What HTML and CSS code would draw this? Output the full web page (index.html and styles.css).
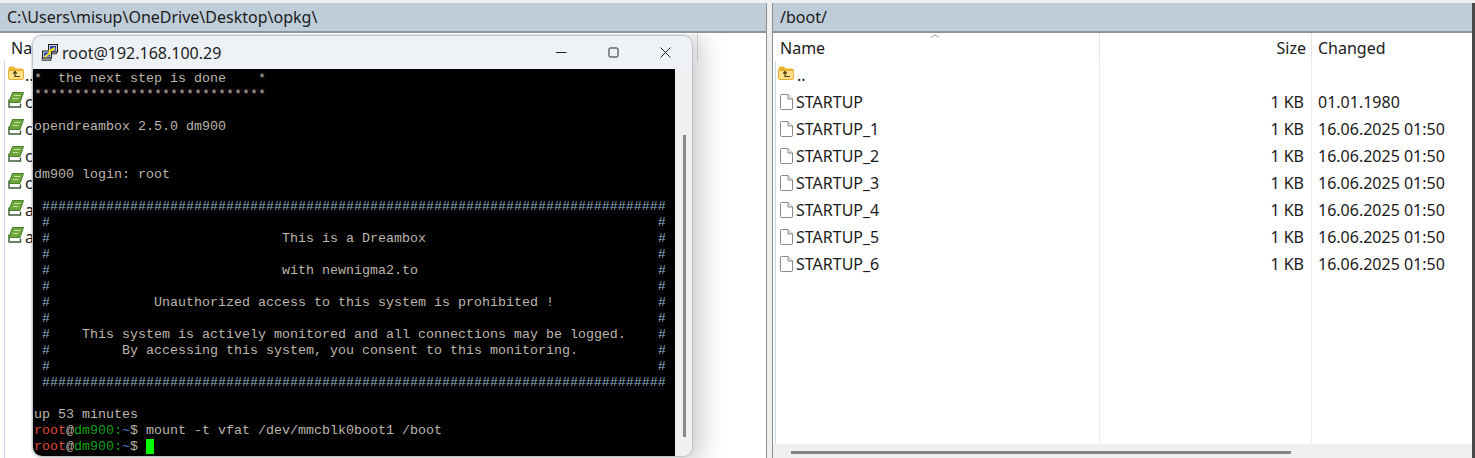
FILE: index.html
```html
<!DOCTYPE html>
<html lang="en">
<head>
<meta charset="utf-8">
<title>WinSCP</title>
<link rel="stylesheet" href="styles.css">
</head>
<body>
<svg class="defs" width="0" height="0" aria-hidden="true">
  <symbol id="up" viewBox="0 0 16 14">
    <path d="M0.5 2.5 Q0.5 0.5 2.5 0.5H6L7.5 2.5H14Q15.5 2.5 15.5 4V5H0.5Z" fill="#f0b429"/>
    <path d="M0.5 4.5H15.5V12Q15.5 13.5 14 13.5H2Q0.5 13.5 0.5 12Z" fill="#fde08a" stroke="#e6ad35"/>
    <path d="M7 5.5 L7 10.5 H12 M5.2 7.6 L7 5.5 L8.8 7.6" fill="none" stroke="#4a3b10" stroke-width="1.2"/>
  </symbol>
  <symbol id="book" viewBox="0 0 16 16">
    <path d="M1 7.5V15H12.5V11.5" fill="#fff" stroke="#3f5a3a" stroke-width="1.4"/>
    <path d="M4.5 .5H15.5L12 10.5H.8Z" fill="#6da63a" stroke="#4c7f2e"/>
    <path d="M6 3.5H12.5M4.8 6.5H10.5" stroke="#c4e09a" stroke-width="1"/>
  </symbol>
  <symbol id="file" viewBox="0 0 13 16">
    <path d="M0.5 1.5Q0.5 0.5 1.5 0.5H8L12.5 5V14.5Q12.5 15.5 11.5 15.5H1.5Q0.5 15.5 0.5 14.5Z" fill="#fff" stroke="#8a8a8a"/>
    <path d="M8 0.5V5H12.5" fill="#e8e8e8" stroke="#8a8a8a"/>
  </symbol>
</svg>

<div class="desk">
  <section class="panel panel-left">
    <div class="path">C:\Users\misup\OneDrive\Desktop\opkg\</div>
    <div class="list list-left">
      <div class="col col-lname">
        <div class="head">Name</div>
        <div class="body">
          <div class="cell"><svg class="ic-up"><use href="#up"/></svg><span>..</span></div>
          <div class="cell"><svg class="ic-book"><use href="#book"/></svg><span>c</span></div>
          <div class="cell"><svg class="ic-book"><use href="#book"/></svg><span>c</span></div>
          <div class="cell"><svg class="ic-book"><use href="#book"/></svg><span>c</span></div>
          <div class="cell"><svg class="ic-book"><use href="#book"/></svg><span>c</span></div>
          <div class="cell"><svg class="ic-book"><use href="#book"/></svg><span>a</span></div>
          <div class="cell"><svg class="ic-book"><use href="#book"/></svg><span>a</span></div>
        </div>
      </div>
      <div class="col col-lrest">
        <div class="head"></div>
        <div class="body"></div>
      </div>
    </div>
  </section>

  <section class="panel panel-right">
    <div class="path">/boot/</div>
    <div class="list">
      <div class="col col-name">
        <div class="head head-name">Name<i class="sort"></i></div>
        <div class="body">
          <div class="cell"><svg class="ic-up"><use href="#up"/></svg><span>..</span></div>
          <div class="cell"><svg class="ic-file"><use href="#file"/></svg><span>STARTUP</span></div>
          <div class="cell"><svg class="ic-file"><use href="#file"/></svg><span>STARTUP_1</span></div>
          <div class="cell"><svg class="ic-file"><use href="#file"/></svg><span>STARTUP_2</span></div>
          <div class="cell"><svg class="ic-file"><use href="#file"/></svg><span>STARTUP_3</span></div>
          <div class="cell"><svg class="ic-file"><use href="#file"/></svg><span>STARTUP_4</span></div>
          <div class="cell"><svg class="ic-file"><use href="#file"/></svg><span>STARTUP_5</span></div>
          <div class="cell"><svg class="ic-file"><use href="#file"/></svg><span>STARTUP_6</span></div>
        </div>
      </div>
      <div class="col col-size">
        <div class="head">Size</div>
        <div class="body">
          <div class="cell"></div>
          <div class="cell">1 KB</div>
          <div class="cell">1 KB</div>
          <div class="cell">1 KB</div>
          <div class="cell">1 KB</div>
          <div class="cell">1 KB</div>
          <div class="cell">1 KB</div>
          <div class="cell">1 KB</div>
        </div>
      </div>
      <div class="col col-date">
        <div class="head">Changed</div>
        <div class="body">
          <div class="cell"></div>
          <div class="cell">01.01.1980</div>
          <div class="cell">16.06.2025 01:50</div>
          <div class="cell">16.06.2025 01:50</div>
          <div class="cell">16.06.2025 01:50</div>
          <div class="cell">16.06.2025 01:50</div>
          <div class="cell">16.06.2025 01:50</div>
          <div class="cell">16.06.2025 01:50</div>
        </div>
      </div>
    </div>
    <div class="hscroll"><div class="hthumb"></div></div>
  </section>
</div>

<div class="term">
  <div class="term-title">
    <svg class="putty" viewBox="0 0 18 18">
      <rect x="7.5" y="0.5" width="9" height="7.5" fill="#cfd6e4" stroke="#1a1a1a"/>
      <rect x="9" y="2" width="6" height="4.5" fill="#2a3fb0"/>
      <rect x="7.5" y="8" width="8" height="2" fill="#9a9a9a" stroke="#1a1a1a" stroke-width=".6"/>
      <rect x="1.5" y="7" width="9" height="7" fill="#cfd6e4" stroke="#1a1a1a"/>
      <rect x="3" y="8.5" width="6" height="4" fill="#2a3fb0"/>
      <rect x="1" y="14" width="9" height="2.5" fill="#9a9a9a" stroke="#1a1a1a" stroke-width=".6"/>
      <path d="M3.5 13 L9 9 L8.5 7 L14 4" fill="none" stroke="#f6e51a" stroke-width="2"/>
    </svg>
    <span class="term-name">root@192.168.100.29</span>
    <div class="controls">
      <svg viewBox="0 0 11 11"><path d="M0 5.5H10.5" stroke="#222" stroke-width="1" fill="none"/></svg>
      <svg viewBox="0 0 11 11"><rect x="1" y="1" width="9" height="9" rx="1.2" stroke="#222" stroke-width="1" fill="none"/></svg>
      <svg viewBox="0 0 11 11"><path d="M.5 .5L10.5 10.5M10.5 .5L.5 10.5" stroke="#222" stroke-width="1" fill="none"/></svg>
    </div>
  </div>
  <div class="term-main">
<pre class="screen">*  the next step is done    *
*****************************

opendreambox 2.5.0 dm900


dm900 login: root

<span class="hash"> ##############################################################################</span>
<span class="hash"> #                                                                            #</span>
<span class="hash"> #</span>                             This is a Dreambox                             <span class="hash">#</span>
<span class="hash"> #                                                                            #</span>
<span class="hash"> #</span>                             with newnigma2.to                              <span class="hash">#</span>
<span class="hash"> #                                                                            #</span>
<span class="hash"> #</span>             Unauthorized access to this system is prohibited !             <span class="hash">#</span>
<span class="hash"> #                                                                            #</span>
<span class="hash"> #</span>    This system is actively monitored and all connections may be logged.    <span class="hash">#</span>
<span class="hash"> #</span>         By accessing this system, you consent to this monitoring.          <span class="hash">#</span>
<span class="hash"> #                                                                            #</span>
<span class="hash"> ##############################################################################</span>

up 53 minutes
<span class="p-user">root</span>@<span class="p-host">dm900:</span><span class="p-path">~</span>$ mount -t vfat /dev/mmcblk0boot1 /boot
<span class="p-user">root</span>@<span class="p-host">dm900:</span><span class="p-path">~</span>$ <span class="cursor"> </span></pre>
    <div class="vscroll"><div class="vthumb"></div></div>
  </div>
</div>
</body>
</html>
```
FILE: styles.css
```css
* { box-sizing: border-box; }
html, body { margin: 0; height: 100%; }
body {
  width: 1475px;
  height: 458px;
  overflow: hidden;
  position: relative;
  background: #f0f0f0;
  font-family: "Noto Sans", "Open Sans", sans-serif;
  font-size: 16px;
  color: #1a1a1a;
}
.defs { position: absolute; }

.desk {
  display: flex;
  gap: 5px;
  height: 458px;
  padding-top: 3px;
}
.panel {
  display: flex;
  flex-direction: column;
  background: #fff;
  height: 455px;
}
.panel-left { width: 767px; border-right: 1px solid #8a8f94; }
.panel-right { flex: 1; border-left: 1px solid #8a8f94; border-right: 3px solid #4a4a4a; }

.path {
  height: 30px;
  flex: none;
  padding: 0 0 1px 7px;
  display: flex;
  align-items: center;
  background: #bfcdd9;
  border-bottom: 2px solid #8b939b;
  font-size: 16px;
}

.list { flex: 1; display: flex; min-height: 0; }
.list-left { padding-left: 4px; }
.col { display: flex; flex-direction: column; }
.head {
  height: 28px;
  flex: none;
  display: flex;
  align-items: center;
  padding-top: 2px;
  position: relative;
}
.body { flex: 1; }
.cell {
  height: 27px;
  display: flex;
  align-items: center;
  white-space: nowrap;
}

.col-lname { width: 693px; }
.col-lname .head { padding-left: 7px; }
.col-lname .body { border-left: 1px solid #c6d8ee; }
.col-lname .cell { padding-left: 3px; gap: 1px; }
.col-lrest { flex: 1; }
.col-lrest .head { border-left: 1px solid #dcdcdc; }

.col-name { width: 326px; }
.col-name .head { padding-left: 7px; }
.col-name .body { margin-left: 2px; border-left: 1px solid #c6d8ee; }
.col-name .cell { padding-left: 2px; gap: 3px; }
.col-name .cell:not(:first-child) { padding-left: 4px; gap: 3px; }
.col-size { width: 212px; }
.col-size .head { justify-content: flex-end; padding-right: 5px; border-left: 1px solid #e4e4e4; }
.col-size .body { border-left: 1px solid #e8f1fb; }
.col-size .cell { justify-content: flex-end; padding-right: 7px; }
.col-date { flex: 1; }
.col-date .head { padding-left: 6px; border-left: 1px solid #e4e4e4; }
.col-date .body { border-left: 1px solid #e8f1fb; }
.col-date .cell { padding-left: 6px; }

.sort {
  position: absolute;
  left: 159px;
  top: 1px;
  width: 6px;
  height: 6px;
  border-left: 1px solid #9a9a9a;
  border-top: 1px solid #9a9a9a;
  transform: scaleY(.6) rotate(45deg);
}

.ic-up { width: 16px; height: 14px; flex: none; margin-top: -4px; }
.ic-book { width: 16px; height: 16px; flex: none; margin-top: -3px; }
.ic-file { width: 13px; height: 16px; flex: none; }

.hscroll {
  height: 14px;
  flex: none;
  background: #f0f0f0;
  padding: 7px 0 0 18px;
}
.hthumb { width: 500px; height: 3px; background: #858585; }

.term {
  position: absolute;
  left: 33px;
  top: 36px;
  width: 659px;
  height: 420px;
  display: flex;
  flex-direction: column;
  border-radius: 9px;
  background: #f0f0f0;
  overflow: hidden;
  box-shadow: 0 0 1px 1px #bfc3c7, 4px 2px 26px 6px rgba(0,0,0,.2);
  clip-path: inset(-2px -40px -2px -2px round 9px);
}
.term-title {
  height: 33px;
  flex: none;
  display: flex;
  align-items: center;
  background: #eef2f7;
  padding-left: 8px;
}
.putty { width: 18px; height: 18px; flex: none; }
.term-name { margin-left: 3px; font-size: 16px; color: #222; }
.controls {
  margin-left: auto;
  display: flex;
  gap: 41px;
  padding-right: 21px;
}
.controls svg { width: 11px; height: 11px; display: block; }

.term-main { flex: 1; display: flex; min-height: 0; }
.screen {
  width: 642px;
  margin: 0;
  padding: 2px 0 0 1px;
  background: #000;
  color: #bdb6aa;
  font-family: "Liberation Mono", monospace;
  font-size: 13.33px;
  line-height: 16px;
  overflow: hidden;
}
.hash { color: #8fb0c8; }
.p-user { color: #e04a3c; }
.p-host { color: #12a012; }
.p-path { color: #4a7fd0; }
.cursor { background: #00ff00; }
.vscroll { flex: 1; background: #f0f0f0; padding: 66px 0 0 8px; }
.vthumb { width: 3px; height: 302px; background: #8a8a8a; }
```
